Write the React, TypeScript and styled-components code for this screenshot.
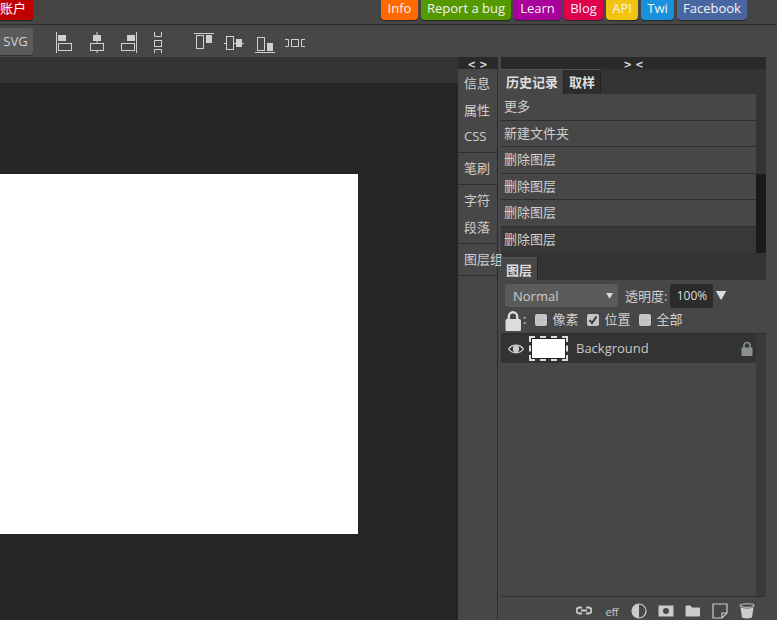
import React from 'react';
import styled, { createGlobalStyle } from 'styled-components';

const GlobalStyle = createGlobalStyle`
  html, body { margin: 0; padding: 0; height: 100%; background: #474747; overflow: hidden; }
  body { font-family: "Open Sans", "Noto Sans CJK SC", sans-serif; color: #ddd; }
  #root { height: 100%; }
`;

const topLinks = [
  { label: 'Info', color: '#ff6a00', width: 37 },
  { label: 'Report a bug', color: '#559900', width: 90 },
  { label: 'Learn', color: '#a8009a', width: 47 },
  { label: 'Blog', color: '#e0004e', width: 39 },
  { label: 'API', color: '#f2c40f', width: 32 },
  { label: 'Twi', color: '#1a90dc', width: 33 },
  { label: 'Facebook', color: '#4a66a0', width: 70 },
];

const historyRows = ['更多', '新建文件夹', '删除图层', '删除图层', '删除图层', '删除图层'];

export default function App() {
  return (
    <Page>
      <GlobalStyle />
      <TopBar>
        <AccountButton>账户</AccountButton>
        <TopLinks>
          {topLinks.map(link => (
            <TopLink key={link.label} $color={link.color} $width={link.width}>{link.label}</TopLink>
          ))}
        </TopLinks>
      </TopBar>
      <ToolBar>
        <SvgButton>SVG</SvgButton>
        <AlignGroup>
          <ToolIcon viewBox="0 0 24 24">
            <path d="M4.5 1V22" /><rect className="fill" x="6" y="4" width="8" height="6" /><rect x="6.5" y="12.5" width="13" height="7" />
          </ToolIcon>
          <ToolIcon viewBox="0 0 24 24">
            <path d="M13 1V4M13 10V12M13 20V22" /><rect className="fill" x="9" y="4" width="8" height="6" /><rect x="6.5" y="12.5" width="13" height="7" />
          </ToolIcon>
          <ToolIcon viewBox="0 0 24 24">
            <path d="M20.5 1V22" /><rect className="fill" x="11" y="4" width="8" height="6" /><rect x="5.5" y="12.5" width="13" height="7" />
          </ToolIcon>
          <ToolIcon viewBox="0 0 24 24">
            <path d="M6.5 1V5.5H13.5V1M6.5 22V18.5H13.5V22" /><rect x="6.5" y="9.5" width="7" height="6" />
          </ToolIcon>
        </AlignGroup>
        <DistributeGroup>
          <ToolIcon viewBox="0 0 24 24">
            <path d="M2 2.5H22" /><rect x="4.5" y="4.5" width="7" height="13" /><rect className="fill" x="14" y="4" width="6" height="8" />
          </ToolIcon>
          <ToolIcon viewBox="0 0 24 24">
            <path d="M2 12.5H4M12 12.5H14M20 12.5H22" /><rect x="4.5" y="5.5" width="7" height="13" /><rect className="fill" x="14" y="8" width="6" height="8" />
          </ToolIcon>
          <ToolIcon viewBox="0 0 24 24">
            <path d="M3 21.5H23" /><rect x="5.5" y="6.5" width="7" height="13" /><rect className="fill" x="15" y="12" width="6" height="8" />
          </ToolIcon>
          <ToolIcon viewBox="0 0 24 24">
            <path d="M3 8.5H6.5V15.5H3M23 8.5H19.5V15.5H23" /><rect x="9.5" y="8.5" width="7" height="7" />
          </ToolIcon>
        </DistributeGroup>
      </ToolBar>
      <Workspace>
        <CanvasArea>
          <OptionStrip />
          <CanvasScroll>
            <DocumentSheet />
          </CanvasScroll>
        </CanvasArea>
        <SideTabs>
          <DockHandle>&lt; &gt;</DockHandle>
          <SideGroup>
            <SideTab>信息</SideTab>
            <SideTab>属性</SideTab>
            <SideTab>CSS</SideTab>
          </SideGroup>
          <SideGroup>
            <SideTab>笔刷</SideTab>
          </SideGroup>
          <SideGroup>
            <SideTab>字符</SideTab>
            <SideTab>段落</SideTab>
          </SideGroup>
          <SideGroup>
            <SideTab>图层组</SideTab>
          </SideGroup>
        </SideTabs>
        <Panels>
          <DockHandle>&gt; &lt;</DockHandle>
          <TabStrip>
            <PanelTab $active>历史记录</PanelTab>
            <PanelTab>取样</PanelTab>
          </TabStrip>
          <HistoryBody>
            <HistoryList>
              {historyRows.map((row, idx) => (
                <HistoryRow key={idx} $selected={idx === historyRows.length - 1}>{row}</HistoryRow>
              ))}
            </HistoryList>
            <ScrollTrack>
              <ScrollThumb />
            </ScrollTrack>
          </HistoryBody>
          <LayersStrip>
            <PanelTab $active>图层</PanelTab>
          </LayersStrip>
          <LayerControls>
            <BlendSelect>
              Normal
              <Caret>▼</Caret>
            </BlendSelect>
            <OpacityLabel>透明度:</OpacityLabel>
            <OpacityValue>100%</OpacityValue>
            <OpacityArrow>▼</OpacityArrow>
          </LayerControls>
          <LockRow>
            <svg width="18" height="21" viewBox="0 0 18 21">
              <path d="M3.8 10V6.5a4.200 4.200 0 0 1 8.400 0V10" fill="none" stroke="#ddd" strokeWidth="2.4" />
              <rect x="0.5" y="9" width="15.5" height="12" rx="1.5" fill="#ddd" />
            </svg>
            <LockColon>:</LockColon>
            <Check />
            <CheckLabel>像素</CheckLabel>
            <Check $checked>
              <svg width="10" height="10" viewBox="0 0 10 10">
                <path d="M1.5 5L4 8L8.5 1.5" fill="none" stroke="#333" strokeWidth="1.8" />
              </svg>
            </Check>
            <CheckLabel>位置</CheckLabel>
            <Check />
            <CheckLabel>全部</CheckLabel>
          </LockRow>
          <LayerList>
            <LayerRows>
              <LayerRow>
                <svg width="16" height="12" viewBox="0 0 16 12">
                  <path d="M0.8 6C3.5 1 12.5 1 15.2 6C12.5 11 3.5 11 0.8 6Z" fill="#2e2e2e" stroke="#ccc" strokeWidth="1.4" />
                  <circle cx="8" cy="6" r="3.2" fill="#ccc" />
                </svg>
                <LayerThumb />
                <LayerName>Background</LayerName>
                <svg width="12" height="15" viewBox="0 0 12 15">
                  <path d="M3 7V4.5a3 3 0 0 1 6 0V7" fill="none" stroke="#8a8f8f" strokeWidth="1.7" />
                  <rect x="0.5" y="6.5" width="11" height="8.5" rx="1" fill="#8a8f8f" />
                </svg>
              </LayerRow>
            </LayerRows>
            <LayerScrollTrack />
          </LayerList>
          <PanelFooter>
            <svg width="16" height="10" viewBox="0 0 16 10">
              <path d="M6 1.5H3.5a3 3 0 0 0 0 6H6M10 1.5h2.5a3 3 0 0 1 0 6H10M5 4.5h6" fill="none" stroke="#ccc" strokeWidth="1.8" />
            </svg>
            <EffLabel>eff</EffLabel>
            <svg width="16" height="16" viewBox="0 0 16 16">
              <circle cx="8" cy="8" r="7" fill="none" stroke="#ccc" strokeWidth="1.2" />
              <path d="M8 1a7 7 0 0 0 0 14Z" fill="#ccc" />
            </svg>
            <svg width="16" height="12" viewBox="0 0 16 12">
              <path fillRule="evenodd" d="M0.5 0.5h15v11h-15ZM8 3a3 3 0 1 0 0 6a3 3 0 0 0 0-6Z" fill="#ccc" />
            </svg>
            <svg width="16" height="12" viewBox="0 0 16 12">
              <path d="M0.5 1.5a1 1 0 0 1 1-1h4l1.5 2h7a1 1 0 0 1 1 1v7a1 1 0 0 1-1 1h-12.5a1 1 0 0 1-1-1Z" fill="#ccc" />
            </svg>
            <svg width="16" height="16" viewBox="0 0 16 16">
              <path d="M1 1H15V10L10 15H1ZM15 10H10V15" fill="none" stroke="#ccc" strokeWidth="1.2" />
            </svg>
            <svg width="16" height="16" viewBox="0 0 16 16">
              <ellipse cx="8" cy="2.5" rx="7" ry="1.8" fill="none" stroke="#ccc" strokeWidth="1.1" />
              <path d="M1.5 4.5Q8 6.5 14.500 4.500L13 14.500Q8 16.500 3 14.500Z" fill="#ccc" />
            </svg>
          </PanelFooter>
        </Panels>
      </Workspace>
    </Page>
  );
}

const Page = styled.div`
  width: 777px;
  height: 620px;
  display: flex;
  flex-direction: column;
  overflow: hidden;
  background: #474747;
`;

const TopBar = styled.div`
  height: 24px;
  flex: none;
  display: flex;
  justify-content: space-between;
  box-sizing: content-box;
  background: #454545;
  border-bottom: 1px solid #2b2b2b;
`;

const AccountButton = styled.div`
  width: 45px;
  height: 24px;
  margin: -4px 0 0 -12px;
  padding: 0 0 4px 12px;
  box-sizing: border-box;
  display: flex;
  align-items: flex-end;
  background: #c00000;
  border-radius: 3px;
  box-shadow: 0 1px 0 #222;
  color: #fff;
  font-size: 13px;
  line-height: 16px;
`;

const TopLinks = styled.div`
  display: flex;
  gap: 3px;
  margin-right: 30px;
  height: 20px;
`;

const TopLink = styled.div<{ $color: string; $width: number }>`
  width: ${p => p.$width}px;
  height: 20px;
  background: ${p => p.$color};
  border-radius: 0 0 4px 4px;
  box-shadow: 0 1px 0 rgba(0, 0, 0, 0.45);
  color: #f4f4f4;
  font-size: 13px;
  line-height: 16px;
  text-align: center;
  white-space: nowrap;
`;

const ToolBar = styled.div`
  height: 32px;
  flex: none;
  display: flex;
  align-items: center;
  background: #474747;
`;

const SvgButton = styled.div`
  width: 40px;
  height: 27px;
  margin: 1px 0 0 -7px;
  padding-left: 5px;
  box-sizing: border-box;
  background: #5b5b5b;
  border-radius: 3px;
  box-shadow: 0 1px 0 #333;
  color: #cfd3d6;
  font-size: 13px;
  line-height: 26px;
  text-align: center;
`;

const AlignGroup = styled.div`
  display: flex;
  gap: 8px;
  margin: 4px 0 0 19px;
`;

const DistributeGroup = styled.div`
  display: flex;
  gap: 6px;
  margin: 4px 0 0 20px;
`;

const ToolIcon = styled.svg`
  width: 24px;
  height: 24px;
  flex: none;
  overflow: visible;
  fill: none;
  stroke: #d0d0d0;
  stroke-width: 1;
  .fill { fill: #d0d0d0; stroke: none; }
`;

const Workspace = styled.div`
  flex: 1;
  min-height: 0;
  display: flex;
`;

const CanvasArea = styled.div`
  width: 458px;
  flex: none;
  display: flex;
  flex-direction: column;
`;

const OptionStrip = styled.div`
  height: 26px;
  flex: none;
  background: #333;
`;

const CanvasScroll = styled.div`
  flex: 1;
  background: #252525;
  padding-top: 91px;
`;

const DocumentSheet = styled.div`
  width: 358px;
  height: 360px;
  background: #fff;
`;

const SideTabs = styled.div`
  width: 39px;
  flex: none;
  box-sizing: content-box;
  border-right: 1px solid #2c2c2c;
  display: flex;
  flex-direction: column;
  position: relative;
  z-index: 1;
`;

const DockHandle = styled.div`
  height: 12px;
  flex: none;
  background: #2a2a2a;
  color: #ddd;
  font-family: "DejaVu Sans", sans-serif;
  font-size: 10px;
  font-weight: 700;
  line-height: 15px;
  text-align: center;
  white-space: pre;
`;

const SideGroup = styled.div`
  padding: 2px 0 2.5px;
  background: #474747;
  border-bottom: 1px solid #2e2e2e;
  ${DockHandle} + & { padding-top: 1px; }
`;

const SideTab = styled.div`
  height: 26.5px;
  padding-left: 6px;
  color: #cfcfcf;
  font-size: 13px;
  line-height: 26.5px;
  white-space: nowrap;
`;

const Panels = styled.div`
  width: 265px;
  margin-left: 3px;
  flex: none;
  display: flex;
  flex-direction: column;
`;

const TabStrip = styled.div`
  height: 25px;
  flex: none;
  display: flex;
  background: #333;
`;

const LayersStrip = styled(TabStrip)`
  height: 27px;
  padding-top: 4px;
  box-sizing: border-box;
`;

const PanelTab = styled.div<{ $active?: boolean }>`
  padding: 0 5px;
  background: ${p => (p.$active ? '#474747' : '#2d2d2d')};
  border-top: 1px solid #555;
  border-right: 1px solid #222;
  color: #ddd;
  font-size: 13px;
  font-weight: 700;
  line-height: 24px;
  white-space: nowrap;
  position: relative;
  z-index: 2;
`;

const HistoryBody = styled.div`
  height: 159px;
  flex: none;
  display: flex;
  background: #333;
`;

const HistoryList = styled.div`
  width: 255px;
  flex: none;
`;

const HistoryRow = styled.div<{ $selected?: boolean }>`
  height: 26.6px;
  box-sizing: border-box;
  padding-left: 3px;
  background: ${p => (p.$selected ? '#383838' : '#474747')};
  border-bottom: 1px solid #2e2e2e;
  color: #d0d0d0;
  font-size: 13px;
  line-height: 25px;
  white-space: nowrap;
`;

const ScrollTrack = styled.div`
  flex: 1;
  display: flex;
  flex-direction: column;
  justify-content: flex-end;
`;

const ScrollThumb = styled.div`
  height: 79px;
  background: #1a1a1a;
`;

const LayerControls = styled.div`
  height: 29px;
  flex: none;
  box-sizing: border-box;
  display: flex;
  align-items: flex-start;
  padding: 4px 0 0 4px;
  background: #474747;
`;

const BlendSelect = styled.div`
  width: 113px;
  height: 23px;
  box-sizing: border-box;
  padding-left: 8px;
  position: relative;
  background: #5b5b5b;
  border-radius: 3px;
  color: #ccc;
  font-size: 13px;
  line-height: 25px;
`;

const Caret = styled.span`
  position: absolute;
  right: 5px;
  top: -1px;
  font-size: 7px;
  color: #ddd;
`;

const OpacityLabel = styled.span`
  margin-left: 7px;
  color: #d0d0d0;
  font-size: 13px;
  line-height: 24px;
  white-space: nowrap;
`;

const OpacityValue = styled.div`
  width: 43px;
  height: 24px;
  margin-left: 3px;
  background: #2b2b2b;
  border-radius: 3px;
  color: #ddd;
  font-size: 12px;
  line-height: 24px;
  text-align: center;
`;

const OpacityArrow = styled.span`
  margin-left: 2px;
  color: #ddd;
  font-size: 11px;
  line-height: 24px;
`;

const LockRow = styled.div`
  height: 24px;
  flex: none;
  box-sizing: border-box;
  display: flex;
  align-items: flex-start;
  padding: 1px 0 0 4px;
  background: #474747;
`;

const LockColon = styled.span`
  color: #ddd;
  font-size: 13px;
  line-height: 18px;
`;

const Check = styled.div<{ $checked?: boolean }>`
  width: 12px;
  height: 12px;
  margin: 4px 0 0 9px;
  display: flex;
  align-items: center;
  justify-content: center;
  background: #c4c4c4;
  border-radius: 2px;
`;

const CheckLabel = styled.span`
  margin-left: 5px;
  color: #cfcfcf;
  font-size: 13px;
  line-height: 18px;
  white-space: nowrap;
`;

const LayerList = styled.div`
  flex: 1;
  min-height: 0;
  display: flex;
  border-top: 1px solid #2a2a2a;
`;

const LayerRows = styled.div`
  width: 255px;
  flex: none;
`;

const LayerScrollTrack = styled.div`
  flex: 1;
  background: #3a3a3a;
`;

const LayerRow = styled.div`
  height: 29px;
  box-sizing: border-box;
  display: flex;
  align-items: center;
  padding: 0 3px 0 7px;
  background: #333;
`;

const LayerThumb = styled.div`
  width: 39px;
  height: 25px;
  margin-left: 5px;
  box-sizing: border-box;
  background: #fff;
  background-clip: padding-box;
  border: 2px dashed #ddd;
  box-shadow: inset 0 0 0 1px #222;
`;

const LayerName = styled.span`
  flex: 1;
  margin-left: 8px;
  color: #c8c8c8;
  font-size: 13px;
  line-height: 29px;
  height: 29px;
`;

const PanelFooter = styled.div`
  height: 24px;
  flex: none;
  box-sizing: border-box;
  border-top: 1px solid #2e2e2e;
  display: flex;
  align-items: center;
  justify-content: flex-end;
  gap: 11px;
  padding: 5px 11px 0 0;
  background: #474747;
`;

const EffLabel = styled.span`
  margin: 0 2px 0 3px;
  color: #ccc;
  font-size: 11px;
  letter-spacing: -0.4px;
`;
